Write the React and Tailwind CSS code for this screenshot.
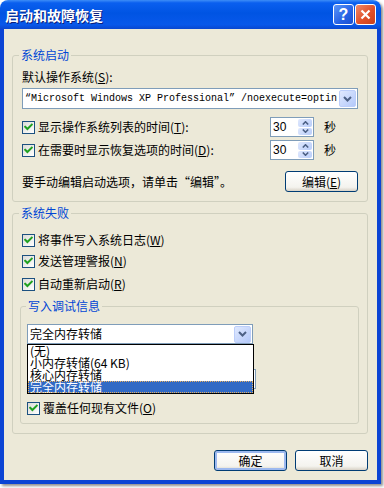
import React from "react";

function Check() {
  return (
    <span className="w-[13px] h-[13px] shrink-0 border border-[#1c5180] bg-[linear-gradient(135deg,#dcdcd7,#ffffff)] flex items-center justify-center">
      <svg width="9" height="9" viewBox="0 0 9 9">
        <path d="M1.2 3.8 L3.4 6 L7.8 1.6" stroke="#21a121" strokeWidth="2" fill="none" strokeLinecap="square" />
      </svg>
    </span>
  );
}

function CheckRow({ children, className = "" }) {
  return (
    <div className={"flex items-center h-[16px] " + className}>
      <Check />
      <span className="ml-[3px] whitespace-nowrap">{children}</span>
    </div>
  );
}

function DropBtn() {
  return (
    <div className="w-[17px] h-[17px] rounded-[2px] border border-[#bccefa] bg-[linear-gradient(135deg,#e0e9fe,#b4c9fa)] flex items-center justify-center shrink-0">
      <svg width="9" height="6" viewBox="0 0 9 6">
        <path d="M1 1 L4.5 4.5 L8 1" stroke="#4d6185" strokeWidth="2" fill="none" />
      </svg>
    </div>
  );
}

function Spin() {
  return (
    <div className="w-[44px] h-[20px] border border-[#7f9db9] bg-white flex shrink-0">
      <span className="flex-1 pl-[2px] leading-[18px] font-['Liberation_Sans',sans-serif] text-[12px]">30</span>
      <div className="w-[16px] flex flex-col gap-[1px] p-[1px]">
        <div className="flex-1 rounded-[2px] bg-[linear-gradient(135deg,#dfe8fd,#b9cdfa)] flex items-center justify-center">
          <svg width="7" height="4" viewBox="0 0 7 4">
            <path d="M0.8 3.5 L3.5 0.8 L6.2 3.5" stroke="#4d6185" strokeWidth="1.6" fill="none" />
          </svg>
        </div>
        <div className="flex-1 rounded-[2px] bg-[linear-gradient(135deg,#dfe8fd,#b9cdfa)] flex items-center justify-center">
          <svg width="7" height="4" viewBox="0 0 7 4">
            <path d="M0.8 0.5 L3.5 3.2 L6.2 0.5" stroke="#4d6185" strokeWidth="1.6" fill="none" />
          </svg>
        </div>
      </div>
    </div>
  );
}

function XPButton({ children, def = false }) {
  return (
    <button
      className={
        "w-[73px] h-[21px] rounded-[3px] border border-[#003c74] bg-[linear-gradient(to_bottom,#ffffff,#f4f3ee_80%,#d8d2c6)] text-[12px] leading-[14px] flex items-center justify-center " +
        (def ? "shadow-[inset_0_0_0_2px_#9db9ef]" : "")
      }
    >
      {children}
    </button>
  );
}

export default function App() {
  return (
    <div className="w-[384px] h-[488px] bg-white text-[12px] leading-[14px] text-black font-['Noto_Sans_CJK_SC','Noto_Sans',sans-serif]">
      <div className="w-[381px] h-[484px] flex flex-col rounded-t-[8px] overflow-hidden shadow-[2px_2px_3px_rgba(0,0,0,0.45)]">
        {/* Title bar */}
        <div className="h-[29px] shrink-0 flex items-center justify-between pl-[5px] pr-[5px] bg-[linear-gradient(to_bottom,#3d8df7_0%,#0a5fef_10%,#0054e3_45%,#0858ea_85%,#0a47cf_100%)]">
          <span className="text-white font-bold text-[14px] leading-[16px] [text-shadow:1px_1px_0_#0a1e7a]">启动和故障恢复</span>
          <div className="flex gap-[1px] items-center">
            <div className="w-[21px] h-[21px] rounded-[3px] border border-white bg-[linear-gradient(135deg,#5c96f8,#2561e4_60%,#1c4fd0)] flex items-center justify-center">
              <span className="text-white font-bold text-[16px] leading-[16px] font-['Liberation_Sans',sans-serif]">?</span>
            </div>
            <div className="w-[21px] h-[21px] rounded-[3px] border border-white bg-[linear-gradient(135deg,#f08a6a,#e0502a_55%,#c8401c)] flex items-center justify-center">
              <svg width="11" height="11" viewBox="0 0 11 11">
                <path d="M1.5 1.5 L9.5 9.5 M9.5 1.5 L1.5 9.5" stroke="white" strokeWidth="2.2" />
              </svg>
            </div>
          </div>
        </div>

        {/* Body */}
        <div className="flex-1 bg-[#ece9d8] border-x-[4px] border-b-[4px] border-[#0b44d4] pl-[8px] pt-[19px]">
          {/* Group 1 */}
          <fieldset className="w-[356px] border border-[#d0d0bf] rounded-[3px]">
            <legend className="ml-[6px] px-[2px] text-[#0046d5]">系统启动</legend>
            <div className="px-[9px] pb-[9px]">
              <div className="mt-[8px]">默认操作系统(<u>S</u>):</div>
              <div className="mt-[4px] h-[21px] border border-[#7f9db9] bg-white flex items-center pr-[1px]">
                <span className="flex-1 pl-[2px] font-['Liberation_Mono',monospace] text-[10px] whitespace-nowrap overflow-hidden">
                  “Microsoft Windows XP Professional” /noexecute=optin
                </span>
                <DropBtn />
              </div>
              <div className="mt-[8px] h-[20px] flex items-center">
                <div className="w-[248px]">
                  <CheckRow>显示操作系统列表的时间(<u>T</u>):</CheckRow>
                </div>
                <Spin />
                <span className="ml-[10px]">秒</span>
              </div>
              <div className="mt-[3px] h-[20px] flex items-center">
                <div className="w-[248px]">
                  <CheckRow>在需要时显示恢复选项的时间(<u>D</u>):</CheckRow>
                </div>
                <Spin />
                <span className="ml-[10px]">秒</span>
              </div>
              <div className="mt-[11px] h-[21px] flex items-center justify-between">
                <span>要手动编辑启动选项，请单击“编辑”。</span>
                <XPButton>编辑(<u>E</u>)</XPButton>
              </div>
            </div>
          </fieldset>

          {/* Group 2 */}
          <fieldset className="w-[356px] mt-[4px] border border-[#d0d0bf] rounded-[3px]">
            <legend className="ml-[6px] px-[2px] text-[#0046d5]">系统失败</legend>
            <div className="pl-[7px] pr-[8px] pb-[9px]">
              <CheckRow className="mt-[12px] ml-[2px]">将事件写入系统日志(<u>W</u>)</CheckRow>
              <CheckRow className="mt-[5px] ml-[2px]">发送管理警报(<u>N</u>)</CheckRow>
              <CheckRow className="mt-[7px] ml-[2px]">自动重新启动(<u>R</u>)</CheckRow>

              <fieldset className="mt-[7px] border border-[#d0d0bf] rounded-[3px]">
                <legend className="ml-[5px] px-[2px] text-[#0046d5]">写入调试信息</legend>
                <div className="pl-[6px] pb-[7px]">
                  <div className="relative mt-[11px] w-[226px]">
                    <div className="h-[20px] border border-[#7f9db9] bg-white flex items-center pr-[1px]">
                      <span className="flex-1 pl-[2px] whitespace-nowrap">完全内存转储</span>
                      <DropBtn />
                    </div>
                    <div className="absolute left-0 top-[20px] z-10 w-[227px] border border-black bg-white">
                      <div className="h-[12px] leading-[12px] pl-[2px]">(无)</div>
                      <div className="h-[12px] leading-[12px] pl-[2px]">小内存转储(64 KB)</div>
                      <div className="h-[12px] leading-[12px] pl-[2px]">核心内存转储</div>
                      <div className="h-[12px] leading-[12px] pl-[2px] bg-[#316ac5] text-white outline-dotted outline-1 outline-[#e8b060] -outline-offset-1">完全内存转储</div>
                    </div>
                  </div>
                  <div className="mt-[8px] h-[14px]"></div>
                  <div className="mt-[3px] w-[229px] h-[20px] border border-[#7f9db9] bg-white"></div>
                  <CheckRow className="mt-[11px]">覆盖任何现有文件(<u>O</u>)</CheckRow>
                </div>
              </fieldset>
            </div>
          </fieldset>

          {/* Buttons */}
          <div className="w-[356px] mt-[16px] flex justify-end gap-[8px]">
            <XPButton def>确定</XPButton>
            <XPButton>取消</XPButton>
          </div>
        </div>
      </div>
    </div>
  );
}
